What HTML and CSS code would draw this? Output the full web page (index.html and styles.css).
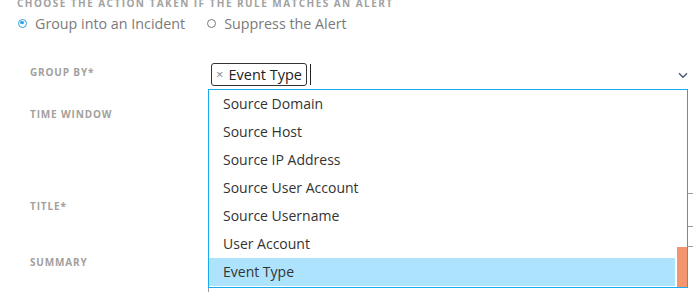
FILE: index.html
```html
<!DOCTYPE html>
<html>
<head>
<meta charset="utf-8">
<link rel="stylesheet" href="styles.css">
</head>
<body>
<div class="page">
  <div class="section-title">Choose the action taken if the rule matches an alert</div>
  <div class="radios">
    <label class="radio"><span class="dot checked"></span>Group into an Incident</label>
    <label class="radio"><span class="dot"></span>Suppress the Alert</label>
  </div>
  <div class="form">
    <div class="row row-group">
      <div class="label">Group by*</div>
      <div class="control">
        <div class="select">
          <span class="tag"><span class="tag-x">×</span>Event Type</span>
          <span class="caret"></span>
          <svg class="chevron" width="10" height="7" viewBox="0 0 10 7"><path d="M1 1.2 L5 5.2 L9 1.2" fill="none" stroke="#4b5872" stroke-width="1.4"/></svg>
        </div>
        <ul class="menu">
          <li>Source Domain</li>
          <li>Source Host</li>
          <li>Source IP Address</li>
          <li>Source User Account</li>
          <li>Source Username</li>
          <li>User Account</li>
          <li class="active">Event Type</li>
          <li class="thumb" aria-hidden="true"></li>
        </ul>
      </div>
    </div>
    <div class="row row-time">
      <div class="label">Time window</div>
      <div class="control"></div>
    </div>
    <div class="row row-title">
      <div class="label">Title*</div>
      <div class="control"><div class="input"></div></div>
    </div>
    <div class="row row-summary">
      <div class="label">Summary</div>
      <div class="control"><div class="textarea"></div></div>
    </div>
  </div>
</div>
</body>
</html>
```

FILE: styles.css
```css
* { box-sizing: border-box; }
html, body { margin: 0; padding: 0; background: #fff; overflow: hidden; }
body { font-family: "Open Sans", "DejaVu Sans", sans-serif; width: 693px; height: 292px; }

.page { padding-left: 17px; margin-top: -3px; }

.section-title {
  font-size: 10px;
  font-weight: 700;
  letter-spacing: 1.45px;
  text-transform: uppercase;
  color: #a2a2a2;
  line-height: 12px;
}

.radios {
  display: flex;
  gap: 21px;
  margin-top: 2px;
  height: 24px;
  align-items: center;
}
.radio {
  display: flex;
  align-items: center;
  font-size: 14.3px;
  color: #7a7a7a;
}
.dot {
  width: 9px; height: 9px;
  border: 1.3px solid #7a7a7a;
  border-radius: 50%;
  margin-right: 8px;
  margin-left: 1px;
  position: relative;
}
.dot.checked { border-color: #2aa4e4; }
.dot.checked::after {
  content: "";
  position: absolute;
  left: 1.2px; top: 1.2px;
  width: 3.8px; height: 3.8px;
  border-radius: 50%;
  background: #2aa4e4;
}

.form { margin-left: 13px; margin-top: 27px; }
.row { display: flex; }
.label {
  width: 178px;
  flex: none;
  font-size: 10px;
  font-weight: 700;
  letter-spacing: 0.85px;
  text-transform: uppercase;
  color: #a39f9e;
  line-height: 12px;
}
.control { flex: 1; position: relative; }

.row-group { height: 42px; }
.row-group .label { padding-top: 4px; }
.select {
  display: flex;
  align-items: center;
  height: 24px;
  padding-left: 3px;
  margin-right: -3px;
}
.tag {
  display: inline-flex;
  align-items: center;
  height: 23px;
  border: 1px solid #333;
  border-radius: 3px;
  padding: 0 4px 0 4px;
  font-size: 14.5px;
  color: #222;
}
.tag-x { color: #888; font-size: 13px; margin-right: 5px; }
.caret { width: 1px; height: 21px; background: #222; margin-left: 3px; }
.chevron { margin-left: auto; margin-right: 8px; margin-top: 2px; }

.menu {
  position: absolute;
  left: 0; top: 27px;
  width: 480px;
  height: 199px;
  margin: 0;
  padding: 0;
  list-style: none;
  border: 1px solid #1aabef;
  background: #fff;
  z-index: 5;
}
.menu li {
  height: 28px;
  line-height: 28px;
  padding-left: 14px;
  font-size: 14px;
  color: #333;
  width: 466px;
}
.menu li.active { background: #ade3fd; }
.menu li.thumb {
  position: absolute;
  right: 0; bottom: 0;
  width: 10px; height: 40px;
  padding: 0;
  background: #f39670;
}

.row-time { height: 92px; }
.row-time .label { padding-top: 4px; }

.row-title { height: 56px; }
.row-title .label { padding-top: 4px; }
.input { height: 34px; margin-top: -3px; border: 1px solid #9a9a9a; border-radius: 2px; margin-right: -20px; }

.row-summary { height: 60px; }
.row-summary .label { padding-top: 4px; }
.textarea { height: 80px; margin-top: -6px; border: 1px solid #9a9a9a; border-radius: 2px; margin-right: -20px; }
```
